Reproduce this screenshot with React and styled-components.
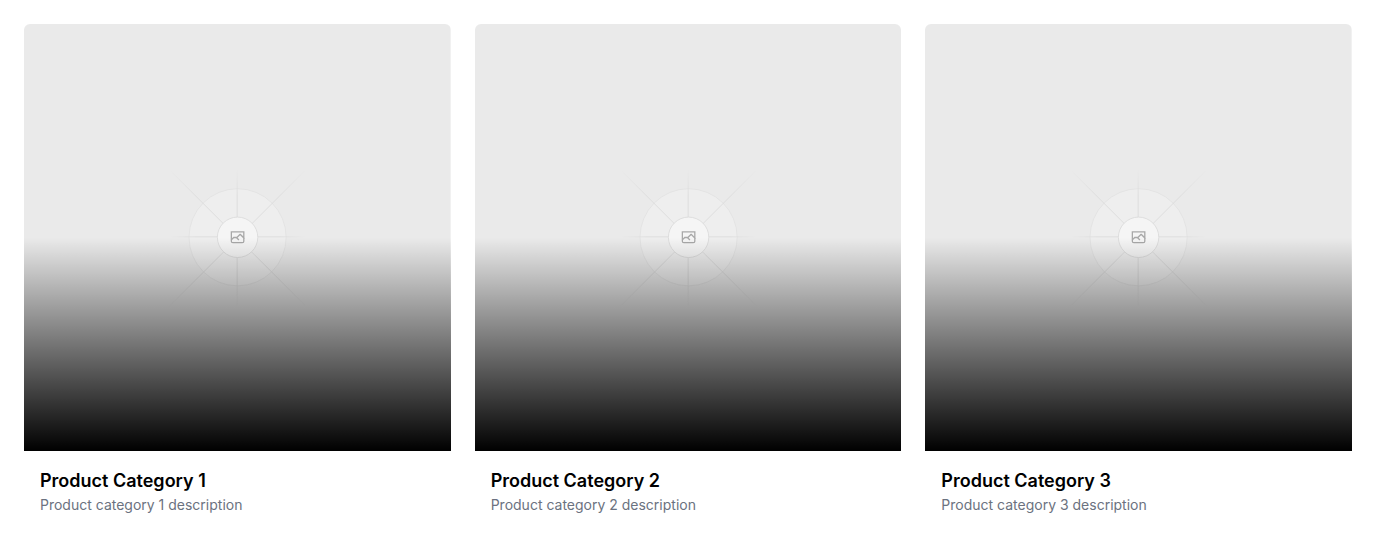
import React from "react";
import styled, { createGlobalStyle } from "styled-components";

const GlobalStyle = createGlobalStyle`
  *, *::before, *::after { box-sizing: border-box; }
  body {
    margin: 0;
    background: #ffffff;
    color: #000000;
    font-family: Inter, "Liberation Sans", sans-serif;
  }
`;

const Grid = styled.main`
  display: grid;
  grid-template-columns: repeat(3, minmax(0, 1fr));
  gap: 24px;
  padding: 24px;
`;

const Card = styled.article`
  overflow: hidden;
  border-radius: 6px;
  background: #ffffff;
`;

const Media = styled.div`
  position: relative;
  aspect-ratio: 1;

  &::after {
    content: "";
    position: absolute;
    inset: 0;
    background: linear-gradient(to bottom, transparent 50%, #000000);
  }
`;

const Picture = styled.svg`
  display: block;
  width: 100%;
  height: 100%;
`;

const Body = styled.div`
  padding: 16px;
`;

const Title = styled.h3`
  margin: 0;
  font-size: 18px;
  line-height: 28px;
  font-weight: 600;
`;

const Description = styled.p`
  margin: 0;
  font-size: 14px;
  line-height: 20px;
  color: #6b7280;
`;

const rays = [
  { name: "rising", x1: 405.99, y1: 796.597, x2: 797.43, y2: 405.157 },
  { name: "level", x1: 404.846, y1: 598.671, x2: 796.572, y2: 598.671 },
  { name: "upright", x1: 599.5, y1: 795.742, x2: 599.5, y2: 404.017 },
  { name: "falling", x1: 795.717, y1: 796.597, x2: 404.276, y2: 405.157 },
];

function Placeholder({ id, label }) {
  return (
    <Picture viewBox="0 0 1200 1200" fill="none" role="img" aria-label={label}>
      <defs>
        {rays.map(({ name, ...ends }) => (
          <linearGradient key={name} id={`${id}-${name}`} gradientUnits="userSpaceOnUse" {...ends}>
            <stop stopColor="#C9C9C9" stopOpacity="0" />
            <stop offset=".208" stopColor="#C9C9C9" />
            <stop offset=".792" stopColor="#C9C9C9" />
            <stop offset="1" stopColor="#C9C9C9" stopOpacity="0" />
          </linearGradient>
        ))}
      </defs>
      <rect width="1200" height="1200" fill="#EAEAEA" />
      <g opacity=".5">
        <g opacity=".5">
          <circle cx="600.709" cy="599.88" r="136.62" fill="#FAFAFA" />
          <circle cx="600.709" cy="599.88" r="136.62" stroke="#C9C9C9" strokeWidth="2.418" />
        </g>
        {rays.map(({ name, ...ends }) => (
          <line key={name} {...ends} stroke={`url(#${id}-${name})`} strokeWidth="2.418" />
        ))}
        <circle cx="600.709" cy="599.88" r="56.825" fill="#FFFFFF" />
        <path
          fill="#666666"
          fillRule="evenodd"
          clipRule="evenodd"
          d="M616.426 586.58h-31.434v16.176l3.553-3.554.531-.531h9.068l.074-.074 8.463-8.463h2.565l7.18 7.181V586.58Zm-15.715 14.654 3.698 3.699 1.283 1.282-2.565 2.565-1.282-1.283-5.2-5.199h-6.066l-5.514 5.514-.073.073v2.876a2.418 2.418 0 0 0 2.418 2.418h26.598a2.418 2.418 0 0 0 2.418-2.418v-8.317l-8.463-8.463-7.181 7.181-.071.072Zm-19.347 5.442v4.085a6.045 6.045 0 0 0 6.046 6.045h26.598a6.044 6.044 0 0 0 6.045-6.045v-7.108l1.356-1.355-1.282-1.283-.074-.073v-17.989h-38.689v23.43l-.146.146.146.147Z"
        />
        <circle cx="600.709" cy="599.88" r="56.825" stroke="#C9C9C9" strokeWidth="2.418" />
      </g>
    </Picture>
  );
}

const categories = [1, 2, 3].map((n) => ({
  id: `category-${n}`,
  title: `Product Category ${n}`,
  description: `Product category ${n} description`,
}));

export default function App() {
  return (
    <>
      <GlobalStyle />
      <Grid>
        {categories.map(({ id, title, description }) => (
          <Card key={id}>
            <Media>
              <Placeholder id={id} label={title} />
            </Media>
            <Body>
              <Title>{title}</Title>
              <Description>{description}</Description>
            </Body>
          </Card>
        ))}
      </Grid>
    </>
  );
}
